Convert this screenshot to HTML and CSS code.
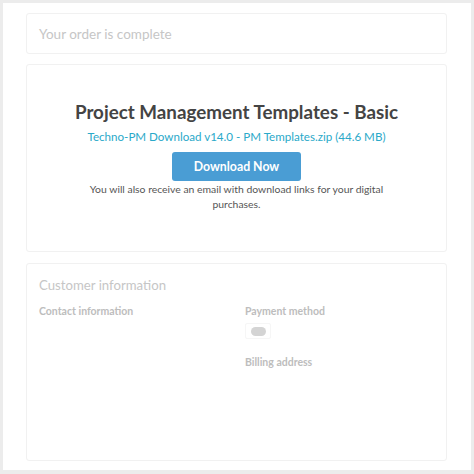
FILE: index.html
```html
<!DOCTYPE html>
<html>
<head>
<meta charset="utf-8">
<link rel="stylesheet" href="styles.css">
</head>
<body>
<div class="frame">
  <div class="card card-status">
    <h2 class="muted-heading">Your order is complete</h2>
  </div>
  <div class="card card-download">
    <h1 class="product-title">Project Management Templates - Basic</h1>
    <a class="file-link" href="#">Techno-PM Download v14.0 - PM Templates.zip (44.6 MB)</a>
    <button class="btn-download">Download Now</button>
    <p class="note">You will also receive an email with download links for your digital purchases.</p>
  </div>
  <div class="card card-customer">
    <h2 class="muted-heading muted-heading-sm">Customer information</h2>
    <div class="info-grid">
      <div class="info-col">
        <h3 class="label">Contact information</h3>
      </div>
      <div class="info-col">
        <h3 class="label">Payment method</h3>
        <div class="pay-box"><span class="pay-pill"></span></div>
        <h3 class="label label-billing">Billing address</h3>
      </div>
    </div>
  </div>
</div>
</body>
</html>
```

FILE: styles.css
```css
html, body {
  margin: 0;
  padding: 0;
}
body {
  background: #ececec;
  font-family: Lato, "Open Sans", "Liberation Sans", sans-serif;
  width: 474px;
  height: 474px;
  overflow: hidden;
}
.frame {
  box-sizing: border-box;
  margin: 3px 3px 0 3px;
  width: 468px;
  height: 467px;
  background: #fff;
  padding: 10px 24px 0 23px;
  display: flex;
  flex-direction: column;
  gap: 10px;
}
.card {
  box-sizing: border-box;
  border: 1px solid #f1f1f1;
  border-radius: 3px;
  background: #fff;
}
.card-status {
  height: 41px;
  padding: 10px 12px 0 12px;
}
.muted-heading {
  margin: 0;
  font-size: 13.5px;
  line-height: 20px;
  font-weight: 400;
  color: #c6c6c6;
}
.muted-heading-sm {
  font-size: 13.2px;
}
.card-download {
  height: 188px;
  padding: 35px 12px 0 12px;
  display: flex;
  flex-direction: column;
  align-items: center;
  text-align: center;
}
.product-title {
  margin: 0;
  font-size: 18.8px;
  line-height: 24px;
  font-weight: 700;
  color: #444;
}
.file-link {
  margin-top: 4px;
  font-size: 11.6px;
  line-height: 18px;
  color: #2aa9c9;
  text-decoration: none;
}
.btn-download {
  margin-top: 6px;
  width: 129px;
  height: 29px;
  border: 0;
  border-radius: 3px;
  background: #4a9dd4;
  color: #fff;
  font-family: inherit;
  font-size: 12.3px;
  font-weight: 700;
  padding: 0;
}
.note {
  margin: 1px 0 0 0;
  width: 320px;
  font-size: 10.4px;
  line-height: 15px;
  color: #555;
}
.card-customer {
  margin-top: 1px;
  height: 198px;
  padding: 11px 12px 0 12px;
}
.info-grid {
  margin-top: 8px;
  display: grid;
  grid-template-columns: 206px 1fr;
}
.label {
  margin: 0;
  font-size: 10.5px;
  line-height: 16px;
  font-weight: 700;
  color: #bdbdbd;
}
.pay-box {
  margin-top: 4px;
  width: 26px;
  height: 16px;
  box-sizing: border-box;
  border: 1px solid #f6f6f6;
  border-radius: 2px;
  display: flex;
  align-items: center;
  justify-content: center;
}
.pay-pill {
  width: 15px;
  height: 9px;
  border-radius: 5px;
  background: #d4d4d4;
}
.label-billing {
  margin-top: 15px;
}
```
